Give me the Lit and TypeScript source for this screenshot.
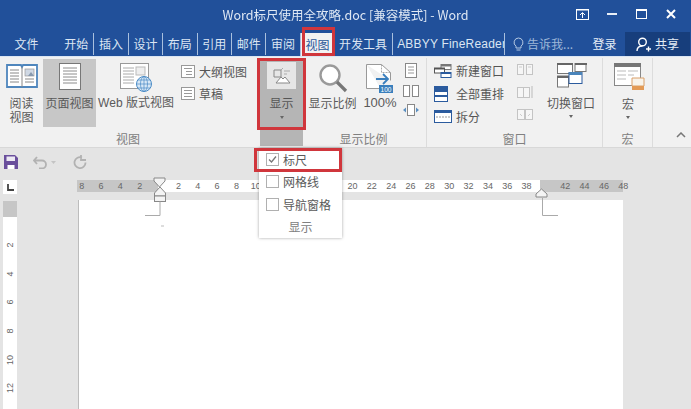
import { LitElement, html, css, svg } from "lit";
import { customElement } from "lit/decorators.js";

const tabs: [string, number, string][] = [
  ["开始", 34.4, ""], ["插入", 34.4, "s"], ["设计", 34.4, "s"], ["布局", 34.4, "s"], ["引用", 34.4, "s"],
  ["邮件", 34.4, "s"], ["审阅", 34.4, "s"], ["视图", 34.4, "active"], ["开发工具", 58, ""], ["ABBYY FineReader", 112, "s"],
];
const hnums = ["8","6","4","2","","2","4","6","8","10","","","","","20","22","24","26","28","30","32","34","36","38","","42","44","46","48"];
const vnums = ["","2","4","6","8","10","12"];

const B = "#2b5b9e";

const icoBook = svg`<svg width="32" height="27" viewBox="0 0 32 27"><path d="M1 2h14l1 2 1-2h14v22H1z" fill="#fff" stroke="#4f86bd" stroke-width="1.8"/><path d="M16 4v20" stroke="#888"/><path d="M4 7h9M4 10h9M4 13h9M4 16h9M4 19h9" stroke="#888"/><rect x="19" y="6" width="9" height="7" fill="#cfd8e4" stroke="#999" stroke-width=".7"/><path d="M22 13l3-4 3 4z" fill="#8899ae"/><path d="M19 16h9M19 19h9" stroke="#888"/></svg>`;
const icoPage = svg`<svg width="22" height="27" viewBox="0 0 22 27"><rect x=".5" y=".5" width="21" height="26" fill="#fff" stroke="#777"/><path d="M4 5h14M4 8h14M4 11h14M4 14h14M4 17h14M4 20h14" stroke="#8c8c8c"/></svg>`;
const icoWeb = svg`<svg width="32" height="29" viewBox="0 0 32 29"><rect x=".5" y=".5" width="28" height="25" fill="#fff" stroke="#999"/><path d="M3 5h11M3 8h11M3 11h11M3 14h11M3 17h11M3 20h11" stroke="#aaa"/><rect x="16" y="4" width="9" height="8" fill="#eee" stroke="#bbb"/><circle cx="24" cy="21" r="7.500" fill="#d8e8f6" stroke="#4a8bc6"/><path d="M16.500 21h15M24 13.500v15M18 17h12M18 25h12" stroke="#4a8bc6" stroke-width=".7"/><ellipse cx="24" cy="21" rx="3.500" ry="7.500" fill="none" stroke="#4a8bc6" stroke-width=".7"/></svg>`;
const icoOutline = svg`<svg width="14" height="13" viewBox="0 0 14 13"><rect x=".5" y=".5" width="13" height="12" fill="#fff" stroke="#999"/><path d="M3 3.500h8M5 6.500h6M5 9.500h6" stroke="#999"/></svg>`;
const icoDraft = svg`<svg width="14" height="13" viewBox="0 0 14 13"><rect x=".5" y=".5" width="13" height="12" fill="#fff" stroke="#999"/><path d="M3 3.500h8M3 6.500h8M3 9.500h8" stroke="#999"/></svg>`;
const icoShow = svg`<svg width="18" height="18" viewBox="0 0 18 18"><path d="M1 3h7v7H1z" fill="none" stroke="#888"/><path d="M8 3l2-2M11 4h6M11 7h3" stroke="#aaa"/><path d="M3 16l5-6 2 2 2-2 5 6z" fill="#fff" stroke="#888"/></svg>`;
const icoZoom = svg`<svg width="30" height="30" viewBox="0 0 30 30"><circle cx="12" cy="12" r="9.500" fill="#fff" stroke="#9a9a9a" stroke-width="2.400"/><path d="M19 19l9 9" stroke="#777" stroke-width="3.200"/></svg>`;
const ico100 = svg`<svg width="28" height="30" viewBox="0 0 28 30"><path d="M.5 1.500h15l9 8v8M.5 1.500v24h14" fill="#fff" stroke="#999"/><path d="M15.500 1.500v8h9" fill="none" stroke="#aaa" stroke-dasharray="2 1"/><path d="M10 16h12M17 11l5 5-5 5" fill="none" stroke="#3a7fbd" stroke-width="1.800"/><rect x="13" y="22" width="14" height="8" fill="#3a7fbd"/><text x="20" y="29" font-size="6.500" font-family="Liberation Sans" fill="#fff" text-anchor="middle">100</text></svg>`;
const icoOne = svg`<svg width="12" height="15" viewBox="0 0 12 15"><rect x=".5" y=".5" width="11" height="14" fill="#fff" stroke="#888"/><path d="M3 4h6M3 7h6M3 10h6" stroke="#999"/></svg>`;
const icoTwo = svg`<svg width="16" height="12" viewBox="0 0 16 12"><rect x=".5" y=".5" width="6" height="11" fill="#fff" stroke="#888"/><rect x="9.500" y=".5" width="6" height="11" fill="#fff" stroke="#888"/></svg>`;
const icoWide = svg`<svg width="16" height="12" viewBox="0 0 16 12"><rect x="4.500" y=".5" width="7" height="11" fill="#fff" stroke="#888"/><path d="M0 6l3-2.500v5zM16 6l-3-2.500v5z" fill="#5c90c2"/></svg>`;
const icoNew = svg`<svg width="18" height="14" viewBox="0 0 18 14"><rect x="7" y=".5" width="10" height="5" fill="#fff" stroke="#777"/><path d="M7 1h10v1.500H7z" fill="#777"/><rect x=".5" y="4" width="10" height="5" fill="#fff" stroke="#555"/><path d="M1 4h9v1.500H1z" fill="#555"/><rect x="7" y="8.500" width="10" height="5" fill="#fff" stroke="${B}"/><path d="M7 8.500h10V10H7z" fill="${B}"/></svg>`;
const icoAll = svg`<svg width="14" height="16" viewBox="0 0 14 16"><rect x=".5" y=".5" width="13" height="15" fill="#fff" stroke="${B}"/><path d="M0 1h14v5H0zM0 9h14v2H0z" fill="${B}"/></svg>`;
const icoSplit = svg`<svg width="18" height="13" viewBox="0 0 18 13"><rect x=".5" y=".5" width="17" height="12" fill="#fff" stroke="${B}"/><path d="M0 0h18v3H0z" fill="${B}"/><path d="M2 7h14" stroke="#999" stroke-dasharray="2 1"/></svg>`;
const icoFaintA = svg`<svg width="16" height="12" viewBox="0 0 16 12"><g fill="#f6f6f6" stroke="#c4c4c4"><rect x=".5" y="1.500" width="6" height="10"/><rect x="9.500" y="1.500" width="6" height="10"/></g><path d="M2 4h3M11 4h3" stroke="#ccc"/></svg>`;
const icoFaintB = svg`<svg width="16" height="14" viewBox="0 0 16 14"><g fill="#f6f6f6" stroke="#c4c4c4"><rect x=".5" y="2.500" width="6" height="10"/><rect x="6.500" y="2.500" width="6" height="10"/></g><path d="M15 1v12" stroke="#bbb"/></svg>`;
const icoFaintC = svg`<svg width="16" height="12" viewBox="0 0 16 12"><g fill="#f6f6f6" stroke="#c4c4c4"><rect x=".5" y="1.500" width="7" height="10"/><rect x="8.500" y="1.500" width="7" height="10"/></g><path d="M3 6l2 2M11 8l2-2" stroke="#ccc"/></svg>`;
const icoSwitch = svg`<svg width="30" height="25" viewBox="0 0 30 25"><rect x=".5" y=".5" width="15" height="10" fill="#fff" stroke="#777"/><path d="M0 0h16v2H0z" fill="#666"/><rect x="18" y=".5" width="11" height="8" fill="#fff" stroke="#777"/><path d="M18 0h12v2H18z" fill="#666"/><rect x=".5" y="13" width="11" height="11" fill="#fff" stroke="#777"/><path d="M0 13h12v2H0z" fill="#666"/><rect x="12" y="9.500" width="13" height="11" fill="#fff" stroke="${B}"/><path d="M12 9h13v3H12z" fill="#4a84ba"/></svg>`;
const icoMacro = svg`<svg width="32" height="28" viewBox="0 0 32 28"><rect x=".5" y=".5" width="26" height="22" fill="#fff" stroke="#888"/><path d="M0 0h27v4H0z" fill="#777"/><path d="M3 8h9M3 12h9M3 16h9M14 8h10M14 12h6" stroke="#bbb"/><path d="M18 15h12v8H18z" fill="#f8f3ea" stroke="#d9a06a"/><path d="M18 23h12v4H18z" fill="#e39a55"/></svg>`;
const marks = svg`<svg class="marks" width="691" height="261" viewBox="0 148 691 261">
  <path d="M154 178h11v3l-5.500 6-5.500-6z" fill="#f4f4f4" stroke="#888"/>
  <path d="M160 187l5.500 6v3h-11v-3z" fill="#f4f4f4" stroke="#888"/>
  <rect x="154.500" y="196" width="11" height="5.500" fill="#f4f4f4" stroke="#888"/>
  <path d="M160 201.500V215.500H145" fill="none" stroke="#aaa"/>
  <path d="M541.500 189l5.500 5v3h-11v-3z" fill="#f4f4f4" stroke="#888"/>
  <path d="M542.500 198V215.500H558" fill="none" stroke="#aaa"/>
  <path d="M161 225h3v2h-3z" fill="#ddd"/>
</svg>`;

@customElement("app-root")
export class AppRoot extends LitElement {
  static styles = css`
    :host { display: block; width: 691px; height: 409px; overflow: hidden; position: relative; background: #e4e4e4;
      font-family: "Noto Sans CJK SC", "Liberation Sans", sans-serif; font-size: 12px; color: #5a5a5a; }
    .wrap { filter: blur(0.4px); width: 691px; height: 409px; position: relative; display: flex; flex-direction: column; overflow: hidden; }
    svg { display: block; flex: none; }
    .title { height: 32px; flex: none; background: #21509a; color: #dfe8f4; display: flex; align-items: center; position: relative; justify-content: flex-end; padding: 0 5px 4px 0; box-sizing: border-box; }
    .title .t { position: absolute; left: 0; right: 0; text-align: center; font-size: 12.500px; top: 6px; line-height: 18px; }
    .ctl { width: 29.500px; height: 20px; display: flex; align-items: center; justify-content: center; position: relative; }
    .tabs { height: 24px; flex: none; background: #21509a; color: #dce6f3; display: flex; align-items: stretch; line-height: 22px; font-size: 12px; }
    .tab { display: flex; align-items: center; justify-content: center; height: 22px; margin-top: 1px; box-sizing: border-box; white-space: nowrap; overflow: hidden; }
    .tab.file { width: 59px; padding-right: 6px; }
    .tab.s { border-left: 1px solid #a9c0de; }
    .tab.active { background: #f2f2f2; color: #2b579a; height: 24px; border-left: 1px solid #a9c0de; }
    .tab.abbyy { font-family: "Liberation Sans", sans-serif; font-size: 12px; justify-content: flex-start; padding-left: 4px; letter-spacing: .2px; }
    .tab.tell { width: 80px; border-left: 1px solid #a9c0de; color: #9eb7d8; gap: 3px; padding-right: 3px; }
    .tab.login { width: 41px; color: #e6edf6; }
    .tab.share { width: 65px; height: 24px; margin-top: 0; background: #173e7c; color: #e6edf6; gap: 3px; }
    .ribbon { height: 92px; flex: none; background: #f1f1f1; border-top: 1px solid #dbe6f3; border-bottom: 1px solid #d8d8d8; box-sizing: border-box; display: flex; align-items: stretch; padding-top: 1px; position: relative; }
    .group { display: flex; flex-direction: column; flex: none; box-sizing: border-box; }
    .group.sep { border-right: 1px solid #dcdcdc; }
    .body { height: 72px; display: flex; flex: none; }
    .label { text-align: center; line-height: 16px; color: #808080; padding-top: 1px; }
    .btn { display: flex; flex-direction: column; align-items: center; flex: none; line-height: 14px; padding-top: 5px; box-sizing: border-box; text-align: center; white-space: nowrap; }
    .btn .ic { height: 33px; display: flex; align-items: flex-start; justify-content: center; flex: none; }
    .btn.on { background: #c7c7c7; height: 68px; margin-top: 1px; padding-top: 4px; }
    .btn.web { font-size: 12px; font-family: "Liberation Sans", "Noto Sans CJK SC", sans-serif; }
    .arrow { width: 0; height: 0; border-left: 2.500px solid transparent; border-right: 2.500px solid transparent; border-top: 3px solid #666; margin-top: 6px; flex: none; }
    .stack { display: flex; flex-direction: column; gap: 7px; flex: none; padding-top: 6px; box-sizing: border-box; }
    .row { display: flex; align-items: center; gap: 4px; height: 15px; white-space: nowrap; color: #555; }
    .minis { display: flex; flex-direction: column; align-items: center; justify-content: space-between; flex: none; height: 58px; padding-top: 5px; box-sizing: border-box; }
    .show { width: 43px; margin-left: 4px; background: #b5b5b5; height: 88px; flex: none; display: flex; flex-direction: column; align-items: center; padding-top: 4px; box-sizing: border-box; color: #555; }
    .show .box { width: 29px; height: 27px; background: #e6e6e6; display: flex; align-items: center; justify-content: center; flex: none; }
    .show .txt { margin-top: 7px; line-height: 14px; }
    .chev { flex: 1; display: flex; align-items: flex-end; justify-content: center; padding: 0 0 9px 18px; }
    .doc { flex: 1; display: flex; flex-direction: column; min-height: 0; background: #e4e4e4; }
    .qat { height: 28px; flex: none; display: flex; align-items: center; padding-left: 4px; box-sizing: border-box; }
    .rulerRow { display: flex; margin-top: 4px; flex: none; height: 14px; }
    .corner { width: 14px; height: 14px; margin-left: 3px; background: #fff; flex: none; display: flex; align-items: center; justify-content: center; }
    .hruler { width: 546px; height: 12px; margin-left: 60px; flex: none; display: flex; background: linear-gradient(to right, #c6c6c6 81px, #fff 81px, #fff 463px, #c6c6c6 463px); font-family: "Liberation Sans", sans-serif; font-size: 9px; color: #666; line-height: 12px; }
    .hcells { display: flex; margin-left: -5px; flex: none; }
    .hcells span { width: 19.350px; text-align: center; flex: none; }
    .main { display: flex; margin-top: 6px; flex: 1; min-height: 0; }
    .vruler { width: 14px; margin-left: 3px; flex: none; padding-top: 2px; box-sizing: border-box; background: linear-gradient(to bottom, #e4e4e4 1px, #c6c6c6 1px, #c6c6c6 17px, #fff 17px); font-family: "Liberation Sans", sans-serif; font-size: 9px; color: #666; }
    .vruler div { height: 28.650px; display: flex; align-items: center; justify-content: center; }
    .vruler span { transform: rotate(-90deg); display: block; }
    .page { width: 544px; margin-left: 61px; background: #fff; border-left: 1px solid #bcbcbc; flex: none; }
    .marks { position: absolute; left: 0; top: 148px; pointer-events: none; }
    .popup { position: absolute; left: 259px; top: 148px; width: 83px; height: 90px; background: #fff; box-shadow: 0 0 3px rgba(0,0,0,.35); display: flex; flex-direction: column; box-sizing: border-box; color: #5a5a5a; }
    .opt { display: flex; align-items: center; gap: 4px; height: 22.500px; padding-left: 7px; flex: none; white-space: nowrap; font-size: 12px; }
    .cb { width: 11px; height: 11px; border: 1px solid #b0b0b0; background: #fff; flex: none; display: flex; }
    .pl { text-align: center; line-height: 20px; color: #808080; margin-top: 1px; }
    .hl { position: absolute; border: 3px solid #d0363c; box-sizing: border-box; pointer-events: none; }
    .hl.a { left: 302px; top: 27px; width: 33px; height: 29px; }
    .hl.b { left: 257px; top: 58px; width: 49px; height: 72px; }
    .hl.c { left: 254px; top: 148px; width: 88px; height: 24px; }
  `;

  render() {
    return html`<div class="wrap">
      <div class="title">
        <div class="t">Word标尺使用全攻略.doc [兼容模式] - Word</div>
        <div class="ctl"><svg width="13" height="11" viewBox="0 0 13 11"><rect x=".5" y=".5" width="12" height="10" fill="none" stroke="#fff"/><path d="M0 1h13M6.500 9V4M4 6l2.500-2.500L9 6" stroke="#fff" fill="none"/></svg></div>
        <div class="ctl"><svg width="10" height="2"><rect width="10" height="2" fill="#e8eef7"/></svg></div>
        <div class="ctl"><svg width="11" height="10" viewBox="0 0 11 10"><rect x=".5" y=".5" width="10" height="9" fill="none" stroke="#fff"/><path d="M0 1h11" stroke="#fff" stroke-width="2"/></svg></div>
        <div class="ctl"><svg width="10" height="10" viewBox="0 0 10 10"><path d="M1 1l8 8M9 1l-8 8" stroke="#fff" stroke-width="2"/></svg></div>
      </div>
      <div class="tabs">
        <div class="tab file">文件</div>
        ${tabs.map(([t, w, c]) => html`<div class="tab ${c} ${t.startsWith("ABBYY") ? "abbyy" : ""}" style="width:${w}px">${t}</div>`)}
        <div class="tab tell"><svg width="11" height="15" viewBox="0 0 11 15"><path d="M5.500 1a4.500 4.500 0 0 0-2.500 8.200V11h5V9.200A4.500 4.500 0 0 0 5.500 1zM3.500 13h4" fill="none" stroke="#b4c8e2"/></svg>告诉我...</div>
        <div class="tab login">登录</div>
        <div class="tab share"><svg width="16" height="15" viewBox="0 0 16 15"><circle cx="6.500" cy="5" r="3.800" fill="none" stroke="#fff" stroke-width="1.400"/><path d="M1 14c0-3 2-5 5.500-5M10 12h5M12.500 9.500v5" fill="none" stroke="#fff" stroke-width="1.400"/></svg>共享</div>
      </div>
      <div class="ribbon">
        <div class="group" style="width:256px">
          <div class="body">
            <div class="btn" style="width:43px">
              <div class="ic">${icoBook}</div><div>阅读<br />视图</div>
            </div>
            <div class="btn on" style="width:53px"><div class="ic">${icoPage}</div><div>页面视图</div></div>
            <div class="btn web" style="width:80px"><div class="ic">${icoWeb}</div><div>Web 版式视图</div></div>
            <div class="stack" style="width:80px;padding-left:5px">
              <div class="row">${icoOutline}大纲视图</div>
              <div class="row">${icoDraft}草稿</div>
            </div>
          </div>
          <div class="label">视图</div>
        </div>
        <div class="show">
          <div class="box">${icoShow}</div>
          <div class="txt">显示</div>
          <div class="arrow"></div>
        </div>
        <div class="group sep" style="width:124px">
          <div class="body">
            <div class="btn" style="width:55px;padding-left:4px"><div class="ic">${icoZoom}</div><div>显示比例</div></div>
            <div class="btn" style="width:40px;font-family:'Liberation Sans',sans-serif;font-size:13px;padding-left:4px"><div class="ic">${ico100}</div><div>100%</div></div>
            <div class="minis" style="width:22px;padding-left:3px">${icoOne}${icoTwo}${icoWide}</div>
          </div>
          <div class="label" style="padding-right:2px">显示比例</div>
        </div>
        <div class="group sep" style="width:176px">
          <div class="body">
            <div class="stack" style="width:84px;padding-left:7px;gap:8px;padding-top:5px">
              <div class="row">${icoNew}新建窗口</div>
              <div class="row">${icoAll}<span style="margin-left:4px">全部重排</span></div>
              <div class="row">${icoSplit}拆分</div>
            </div>
            <div class="minis" style="width:28px;padding-left:0;height:62px">${icoFaintA}${icoFaintB}${icoFaintC}</div>
            <div class="btn" style="width:64px"><div class="ic" style="height:36px;padding-left:2px">${icoSwitch}</div><div style="margin-top:-3px">切换窗口</div><div class="arrow" style="margin-top:5px"></div></div>
          </div>
          <div class="label">窗口</div>
        </div>
        <div class="group sep" style="width:50px">
          <div class="body">
            <div class="btn" style="width:50px"><div class="ic" style="padding-left:4px;height:34px">${icoMacro}</div><div>宏</div><div class="arrow" style="margin-top:5px"></div></div>
          </div>
          <div class="label">宏</div>
        </div>
        <div class="chev"><svg width="10" height="6" viewBox="0 0 10 6"><path d="M1 5l4-4 4 4" fill="none" stroke="#777" stroke-width="1.500"/></svg></div>
      </div>
      <div class="doc">
        <div class="qat">
          <svg width="14" height="14" viewBox="0 0 14 14"><path d="M0 0h11l3 3v11H0z" fill="#6a4f9c"/><rect x="2.500" y="1.500" width="8.500" height="4.500" fill="#ece9f3"/><rect x="3.500" y="10" width="7" height="4" fill="#fff"/></svg>
          <svg style="margin-left:15px" width="14" height="13" viewBox="0 0 14 13"><path d="M4 1L1 4.500 4 8M1.500 4.500H9a4 4 0 0 1 0 8H6" fill="none" stroke="#b2b2b2" stroke-width="1.800"/></svg>
          <svg style="margin-left:4px" width="6" height="4" viewBox="0 0 6 4"><path d="M0 1h5L2.500 4z" fill="#c4c4c4"/></svg>
          <svg style="margin-left:16px" width="14" height="14" viewBox="0 0 14 14"><path d="M9 2.500A5.500 5.500 0 1 0 12.500 7.500M8 0v5h5" fill="none" stroke="#b2b2b2" stroke-width="1.800"/></svg>
        </div>
        <div class="rulerRow">
          <div class="corner"><svg width="7" height="7" viewBox="0 0 7 7"><path d="M1 0v6h6" fill="none" stroke="#444" stroke-width="1.800"/></svg></div>
          <div class="hruler"><div class="hcells">${hnums.map((n) => html`<span>${n}</span>`)}</div></div>
        </div>
        <div class="main">
          <div class="vruler">${vnums.map((n) => html`<div><span>${n}</span></div>`)}</div>
          <div class="page"></div>
        </div>
      </div>
      ${marks}
      <div class="popup">
        <div class="opt"><span class="cb"><svg width="11" height="11" viewBox="0 0 11 11"><path d="M2 5.500l2.500 2.500L9 2.500" fill="none" stroke="#777" stroke-width="1.300"/></svg></span>标尺</div>
        <div class="opt"><span class="cb"></span>网格线</div>
        <div class="opt"><span class="cb"></span>导航窗格</div>
        <div class="pl">显示</div>
      </div>
      <div class="hl a"></div>
      <div class="hl b"></div>
      <div class="hl c"></div>
    </div>`;
  }
}
